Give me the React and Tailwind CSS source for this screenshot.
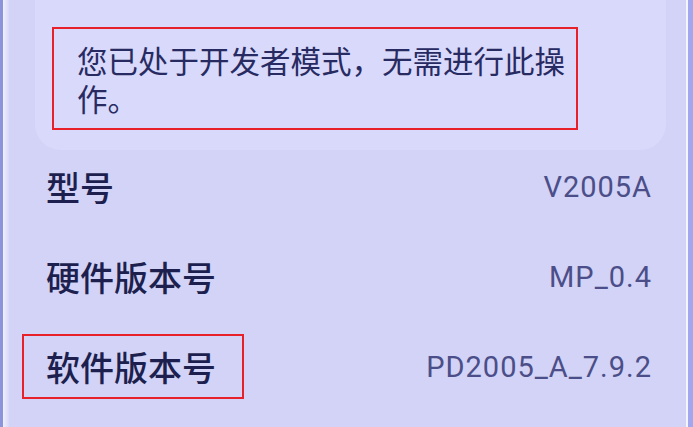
import React from 'react'

/* ── settings rows under the toast ── */
const rows = [
  { label: '型号', value: 'V2005A' },
  { label: '硬件版本号', value: 'MP_0.4' },
  { label: '软件版本号', value: 'PD2005_A_7.9.2', marked: true },
]

export default function App() {
  return (
    <div
      className="flex h-[427px] w-[693px] overflow-hidden bg-[#d2d3f6]"
      style={{ fontFamily: '"Noto Sans CJK SC", "Noto Sans", sans-serif' }}
    >
      {/* left bezel */}
      <div className="w-[3px] flex-shrink-0 bg-[#8e94da]" />
      <div className="w-[6px] flex-shrink-0 bg-gradient-to-r from-[#eeeffe] to-[#d8d9f8]" />

      {/* screen */}
      <div className="flex min-w-0 flex-1 flex-col">
        {/* toast */}
        <div className="ml-[26px] mr-[20px] h-[150px] flex-shrink-0 rounded-b-[26px] bg-[#d8d9fb] pl-[17px] pt-[27px]">
          <div className="h-[103px] w-[526px] border-2 border-[#e8202a] pb-[10px] pl-[23px] pr-[4px] pt-[12px]">
            <p className="text-[30.5px] leading-[38px] text-[#282b62]">
              您已处于开发者模式，无需进行此操作。
            </p>
          </div>
        </div>

        {/* rows */}
        <div className="flex flex-col pl-[37px] pr-[34px]">
          {rows.map((r) => (
            <div key={r.label} className="flex items-center justify-between pb-[36px] pt-[20px]">
              <span className="relative text-[34px] font-medium leading-[34px] text-[#1d1f4e]">
                {r.label}
                {r.marked && (
                  <span className="absolute left-[-24px] top-[-16px] h-[65px] w-[222px] border-2 border-[#e8202a]" />
                )}
              </span>
              <span
                className="text-[29px] leading-[34px] tracking-[1px] text-[#4b4e88]"
                style={{ fontFamily: 'Roboto, "Noto Sans", sans-serif' }}
              >
                {r.value}
              </span>
            </div>
          ))}
        </div>
      </div>

      {/* right bezel */}
      <div className="w-[2px] flex-shrink-0 bg-[#f4f4ff]" />
      <div className="w-[5px] flex-shrink-0 bg-[#a2a6ee]" />
    </div>
  )
}
